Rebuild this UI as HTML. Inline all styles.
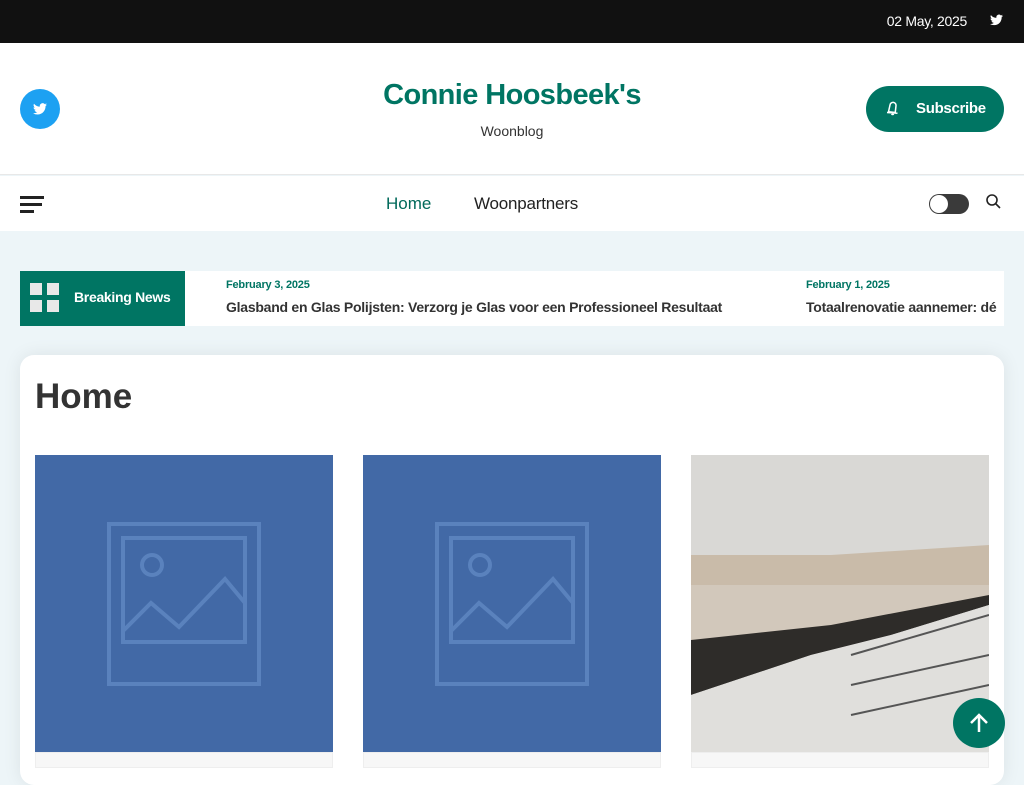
<!DOCTYPE html>
<html><head><meta charset="utf-8"><style>
*{margin:0;padding:0;box-sizing:border-box}
body{width:1024px;height:768px;overflow:hidden;background:#edf5f8;font-family:"Liberation Sans",sans-serif;position:relative}
.top{height:43px;background:#111;color:#fff;position:relative}
.top .d{position:absolute;right:57px;top:13px;font-size:14px;letter-spacing:-.3px}
.hdr{height:132px;background:#fff;position:relative;border-bottom:1px solid #e8e8e8}
.tw{position:absolute;left:20px;width:40px;height:40px;border-radius:50%;background:#1da1f2}
.title{position:absolute;left:0;right:0;text-align:center;color:#007563;font-size:29px;font-weight:bold;letter-spacing:-.6px}
.tag{position:absolute;left:0;right:0;text-align:center;color:#333;font-size:14px}
.sub{position:absolute;left:866px;width:138px;height:46px;border-radius:23px;background:#007563;color:#fff;font-weight:bold;font-size:15px;line-height:46px;padding-left:50px;letter-spacing:-.3px}
.nav{position:absolute;top:176px;left:0;width:1024px;height:55px;background:#fff}
.nav a{position:absolute;top:18px;font-size:17px;color:#222}
.bn{position:absolute;left:20px;top:271px;width:984px;height:55px;background:#fff}
.bnl{position:absolute;left:0;top:0;width:165px;height:55px;background:#007563;color:#fff;font-weight:bold;font-size:14px;letter-spacing:-.3px}
.card{position:absolute;left:20px;top:355px;width:984px;height:430px;background:#fff;border-radius:14px;box-shadow:0 0 18px rgba(0,0,0,.08)}
.ph{position:absolute;top:455px;width:298px;height:297px;background:#4269a6}
.ft{position:absolute;top:752px;width:298px;height:16px;background:#f7f7f7;border:1px solid #eee}
</style></head><body>
<div class="top"><span class="d">02 May, 2025</span>
<svg style="position:absolute;left:990px;top:14px" width="13" height="12" viewBox="0 0 24 20"><path fill="#fff" d="M24 2.4a10 10 0 0 1-2.8.8A5 5 0 0 0 23.3.4a10 10 0 0 1-3.1 1.2A4.9 4.9 0 0 0 11.8 6 14 14 0 0 1 1.7.9a4.9 4.9 0 0 0 1.5 6.6 4.9 4.9 0 0 1-2.2-.6 4.9 4.9 0 0 0 3.9 4.9 5 5 0 0 1-2.2.1 4.9 4.9 0 0 0 4.6 3.4A9.9 9.9 0 0 1 0 17.3 14 14 0 0 0 7.5 19.5c9.1 0 14-7.5 14-14v-.6A10 10 0 0 0 24 2.4z"/></svg></div>
<div class="hdr">
<div class="tw" style="top:46px"><svg style="position:absolute;left:13px;top:14px" width="14" height="12" viewBox="0 0 24 20"><path fill="#fff" d="M24 2.4a10 10 0 0 1-2.8.8A5 5 0 0 0 23.3.4a10 10 0 0 1-3.1 1.2A4.9 4.9 0 0 0 11.8 6 14 14 0 0 1 1.7.9a4.9 4.9 0 0 0 1.5 6.6 4.9 4.9 0 0 1-2.2-.6 4.9 4.9 0 0 0 3.9 4.9 5 5 0 0 1-2.2.1 4.9 4.9 0 0 0 4.6 3.4A9.9 9.9 0 0 1 0 17.3 14 14 0 0 0 7.5 19.5c9.1 0 14-7.5 14-14v-.6A10 10 0 0 0 24 2.4z"/></svg></div>
<div class="title" style="top:36px">Connie Hoosbeek's</div>
<div class="tag" style="top:80px">Woonblog</div>
<div class="sub" style="top:43px">Subscribe<svg style="position:absolute;left:18px;top:13px" width="18" height="18" viewBox="0 0 24 24" fill="none" stroke="#fff" stroke-width="2"><path d="M6 17l2-9a4 4 0 0 1 8 1l-1 9zM4 18l14 1M10 20a2 2 0 0 0 3 0"/></svg></div>
</div>
<div class="nav">
<div style="position:absolute;left:20px;top:20px;width:24px;height:3px;background:#222"></div>
<div style="position:absolute;left:20px;top:27px;width:22px;height:3px;background:#222"></div>
<div style="position:absolute;left:20px;top:34px;width:14px;height:3px;background:#222"></div>
<a style="left:386px;color:#00695a">Home</a><a style="left:474px;letter-spacing:-.2px">Woonpartners</a>
<div style="position:absolute;left:929px;top:18px;width:40px;height:20px;border-radius:10px;background:#3a3a3a"><div style="position:absolute;left:1px;top:1px;width:18px;height:18px;border-radius:50%;background:#fff"></div></div>
<svg style="position:absolute;left:985px;top:17px" width="16" height="16" viewBox="0 0 16 16" fill="none" stroke="#222" stroke-width="1.6"><circle cx="7" cy="7" r="5"/><path d="M11 11l4 4"/></svg>
</div>
<div class="bn"><div class="bnl">
<div style="position:absolute;left:10px;top:12px;width:12px;height:12px;background:#e8e8e8"></div><div style="position:absolute;left:27px;top:12px;width:12px;height:12px;background:#e8e8e8"></div><div style="position:absolute;left:10px;top:29px;width:12px;height:12px;background:#e8e8e8"></div><div style="position:absolute;left:27px;top:29px;width:12px;height:12px;background:#e8e8e8"></div>
<span style="position:absolute;left:54px;top:18px">Breaking News</span></div>
<div style="position:absolute;left:206px;top:8px;font-size:11px;font-weight:bold;color:#007563;letter-spacing:-.2px">February 3, 2025</div>
<div style="position:absolute;left:206px;top:28px;font-size:14px;font-weight:bold;color:#333;white-space:nowrap;letter-spacing:-.25px">Glasband en Glas Polijsten: Verzorg je Glas voor een Professioneel Resultaat</div>
<div style="position:absolute;left:786px;top:8px;font-size:11px;font-weight:bold;color:#007563;letter-spacing:-.2px">February 1, 2025</div>
<div style="position:absolute;left:786px;top:28px;font-size:14px;font-weight:bold;color:#333;white-space:nowrap;width:198px;overflow:hidden;letter-spacing:-.25px">Totaalrenovatie aannemer: dé</div>
</div>
<div class="card"><div style="position:absolute;left:15px;top:22px;font-size:35px;font-weight:bold;color:#333">Home</div></div>
<div class="ph" style="left:35px"><svg width="298" height="297" viewBox="0 0 298 297" fill="none" stroke="#5a82bd" stroke-width="4"><rect x="74" y="69" width="150" height="160"/><rect x="88" y="83" width="122" height="104"/><circle cx="117" cy="110" r="10"/><path d="M88 176l28-28 28 24 46-48 20 24"/></svg></div>
<div class="ph" style="left:363px"><svg width="298" height="297" viewBox="0 0 298 297" fill="none" stroke="#5a82bd" stroke-width="4"><rect x="74" y="69" width="150" height="160"/><rect x="88" y="83" width="122" height="104"/><circle cx="117" cy="110" r="10"/><path d="M88 176l28-28 28 24 46-48 20 24"/></svg></div>
<div class="ph" style="left:691px;background:#d6d5d2;overflow:hidden"><svg width="298" height="297" viewBox="0 0 298 297"><rect width="298" height="100" fill="#d9d8d5"/><path d="M0 100L140 100 298 90 298 135 0 130z" fill="#c9bba9"/><path d="M0 130L298 130 298 145 200 175 120 190 0 225z" fill="#d2c8bb"/><path d="M0 185L140 170 298 140 298 150 200 180 120 200 0 240z" fill="#2e2c29"/><path d="M0 240L120 200 200 180 298 150 298 297 0 297z" fill="#e0dfdc"/><path d="M160 200L298 160M160 230L298 200M160 260L298 230" stroke="#555" stroke-width="2"/></svg></div>
<div class="ft" style="left:35px"></div><div class="ft" style="left:363px"></div><div class="ft" style="left:691px"></div>
<div style="position:absolute;left:953px;top:698px;width:52px;height:50px;border-radius:50%;background:#007563"><svg style="position:absolute;left:15px;top:14px" width="22" height="22" viewBox="0 0 22 22" fill="none" stroke="#fff" stroke-width="2.5"><path d="M11 20V3M3 11l8-8 8 8"/></svg></div>
</body></html>
